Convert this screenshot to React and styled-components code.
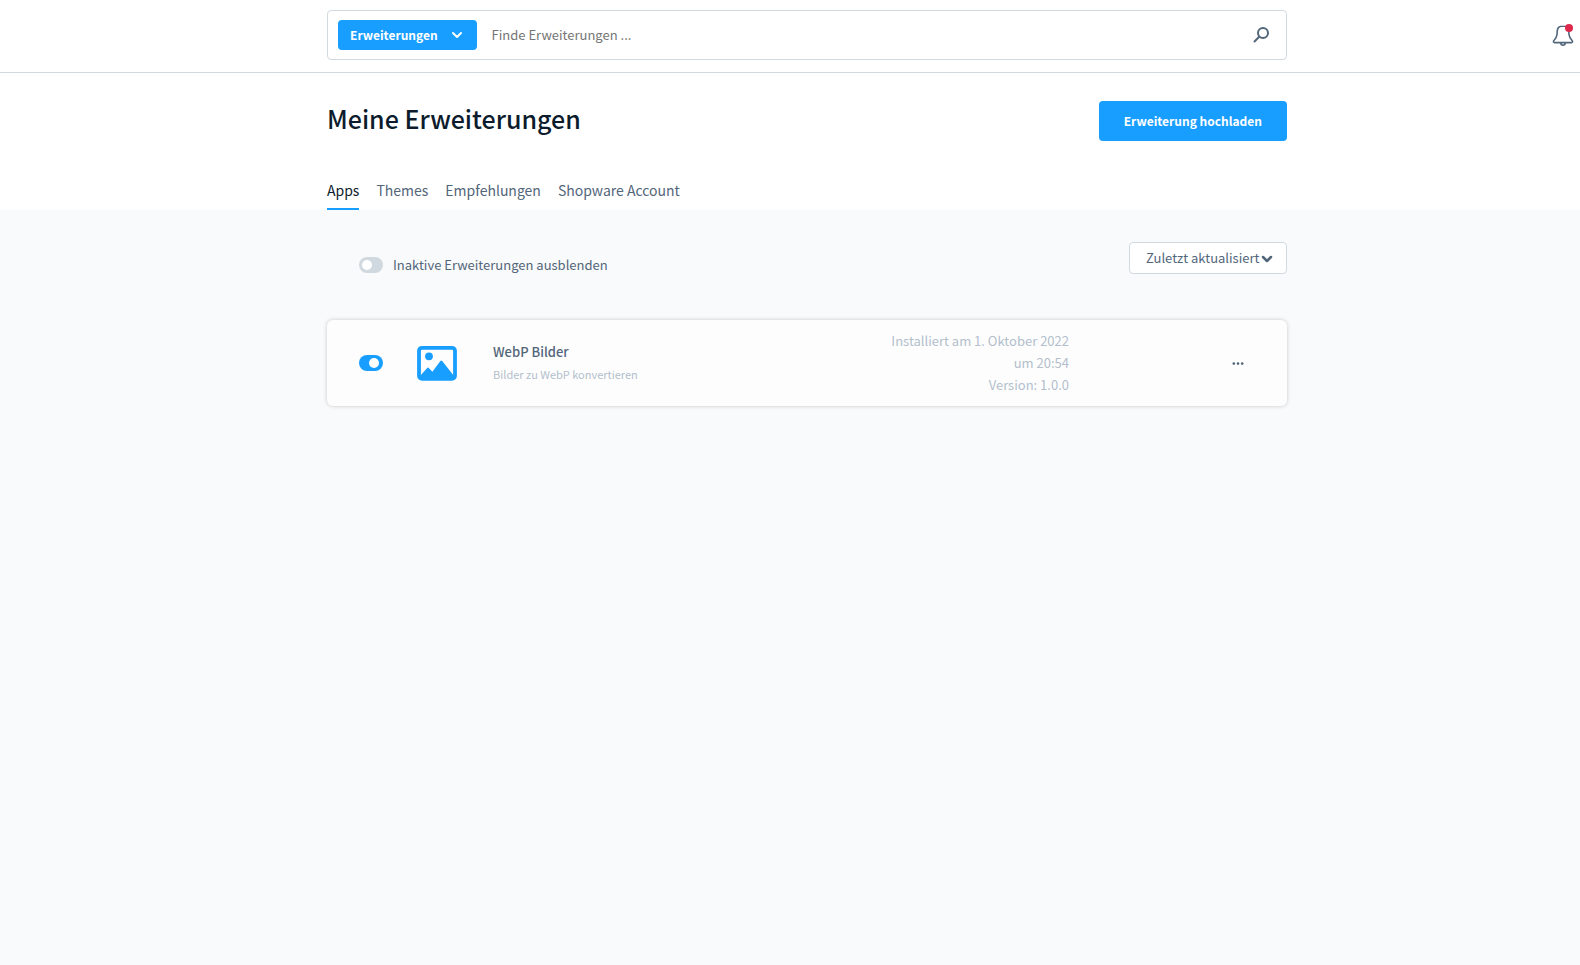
import React, { useState } from 'react'
import styled, { createGlobalStyle, ThemeProvider } from 'styled-components'

const theme = {
    font: '"Noto Sans CJK SC", "Source Sans Pro", sans-serif',
    blue: '#189eff',
    text: '#52667a',
    dark: '#0c1c2c',
    light: '#b3bfcc',
    border: '#d1d9e0',
    body: '#f9fafb',
    red: '#de294c',
    fontxs: '11px',
    fontbtn: '12px',
    fontsm: '13px',
    fontmd: '14px',
    fontxl: '25px',
}

const GlobalStyle = createGlobalStyle`
*, *::before, *::after {
    box-sizing: border-box;
}
body {
    margin: 0;
    background-color: ${props => props.theme.body};
    font-family: ${props => props.theme.font};
    font-size: ${props => props.theme.fontsm};
    line-height: 22px;
    color: ${props => props.theme.text};
}
button, input, select {
    font: inherit;
    color: inherit;
}
button, select {
    cursor: pointer;
}
`

const Header = styled.header`
display: grid;
grid-template-columns: 1fr minmax(0, 960px) 1fr;
padding: 10px 0 12px 34px;
background-color: #fff;
border-bottom: 1px solid ${props => props.theme.border};
`

const SearchBar = styled.form`
grid-column: 2;
display: flex;
align-items: center;
height: 50px;
padding: 0 16px 0 10px;
border: 1px solid ${props => props.theme.border};
border-radius: 4px;
`

const Button = styled.button`
border: 0;
border-radius: 4px;
background-color: ${props => props.theme.blue};
color: #fff;
font-size: ${props => props.theme.fontbtn};
font-weight: 700;
`

const TypeButton = styled(Button)`
display: flex;
align-items: center;
gap: 13px;
height: 30px;
padding: 0 14px 0 12px;
`

const PrimaryButton = styled(Button)`
height: 40px;
padding: 0 25px;
`

const SearchInput = styled.input`
flex: 1;
min-width: 0;
padding: 0 15px;
border: 0;
outline: 0;
background: none;

&::placeholder{
    color: #757575;
    opacity: 1;
}
`

const IconButton = styled.button`
display: flex;
padding: 0;
border: 0;
background: none;
`

const HeaderActions = styled.div`
display: flex;
justify-content: flex-end;
align-items: center;
padding-right: 6px;
`

const PageHead = styled.div`
padding-left: 34px;
background-color: #fff;
`

const Container = styled.div`
max-width: 960px;
margin: 0 auto;
`

const TitleRow = styled.div`
display: flex;
justify-content: space-between;
align-items: flex-start;
padding: 28px 0 32px;
`

const Title = styled.h1`
margin: 0;
font-size: ${props => props.theme.fontxl};
font-weight: 500;
line-height: 34px;
color: ${props => props.theme.dark};
`

const Tabs = styled.nav`
display: flex;
gap: 17px;
`

const Tab = styled.a`
padding: 6px 0 7px;
border-bottom: 2px solid ${props => props.$active ? props.theme.blue : 'transparent'};
font-size: ${props => props.theme.fontmd};
color: ${props => props.$active ? props.theme.dark : props.theme.text};
text-decoration: none;
`

const Content = styled.main`
padding: 32px 0 32px 34px;
`

const Toolbar = styled.div`
display: flex;
justify-content: space-between;
align-items: flex-start;
margin-bottom: 44px;
`

const SwitchLabel = styled.label`
display: flex;
align-items: center;
gap: 10px;
padding: 12px 0 0 32px;
cursor: pointer;
`

const Switch = styled.input`
appearance: none;
flex: none;
display: flex;
align-items: center;
width: 24px;
height: 16px;
margin: 0;
padding: 3px;
border-radius: 8px;
background-color: ${props => props.theme.border};
cursor: pointer;

&::before{
    content: '';
    width: 10px;
    height: 10px;
    border-radius: 50%;
    background-color: #fff;
}
&:checked{
    justify-content: flex-end;
    padding-right: 4px;
    background-color: ${props => props.theme.blue};
}
`

const SelectWrap = styled.div`
position: relative;

svg{
    position: absolute;
    top: 12px;
    right: 14px;
    pointer-events: none;
}
`

const Select = styled.select`
appearance: none;
height: 32px;
padding: 0 26px 0 16px;
border: 1px solid ${props => props.theme.border};
border-radius: 4px;
background-color: #fff;
`

const Card = styled.article`
display: grid;
grid-template-columns: 24px 42px 1fr 180px 142px;
align-items: center;
column-gap: 34px;
padding: 10px 42px 10px 32px;
border-radius: 6px;
background-color: #fdfdfd;
box-shadow: 0 0 4px rgba(0, 0, 0, 0.2);
`

const Info = styled.div`
display: flex;
flex-direction: column;
`

const Name = styled.span`
font-weight: 500;
`

const Description = styled.span`
font-size: ${props => props.theme.fontxs};
color: ${props => props.theme.light};
`

const Meta = styled.div`
text-align: right;
color: ${props => props.theme.light};
`

const MenuCell = styled.div`
display: flex;
justify-content: flex-end;
`

const Chevron = ({ width = 2 }) => (
    <svg width="12" height="10" viewBox="0 0 12 10" fill="none" stroke="currentColor" strokeWidth={width} strokeLinecap="round" strokeLinejoin="round">
        <path d="M2 3l4 4 4-4" />
    </svg>
)

const SearchIcon = () => (
    <svg width="18" height="18" viewBox="0 0 18 18" fill="none" stroke="currentColor" strokeWidth="2" strokeLinecap="round">
        <circle cx="11" cy="7" r="5" />
        <path d="M7.2 10.8L2.5 15.5" />
    </svg>
)

const BellIcon = () => (
    <svg width="22" height="24" viewBox="0 0 22 24" fill="none" stroke="currentColor" strokeWidth="1.6" strokeLinejoin="round">
        <path d="M11 3C7.2 3 5.2 5.4 5.2 8.6c0 4.2-.6 6-2.5 7.9-.7.7-1.3 1.3-1.3 2.1 0 .7.4 1 1.1 1h17c.7 0 1.1-.3 1.1-1 0-.8-.6-1.4-1.3-2.1-1.9-1.9-2.5-3.7-2.5-7.9C16.8 5.4 14.8 3 11 3z" />
        <path d="M8.8 20a2.2 2.2 0 0 0 4.4 0" />
        <circle cx="17" cy="5" r="4" fill={theme.red} stroke="none" />
    </svg>
)

const ImageIcon = () => (
    <svg width="40" height="36" viewBox="0 0 40 36">
        <rect x="2" y="2.8" width="36" height="31" rx="3" fill="none" stroke={theme.blue} strokeWidth="3.8" />
        <circle cx="12" cy="11.3" r="3.9" fill={theme.blue} />
        <path d="M3 32v-1l7.2-8 .8-.5.8.5 3.600 3.700 8-10.700.9-.6.9.6L37 31v1z" fill={theme.blue} />
    </svg>
)

const DotsIcon = () => (
    <svg width="14" height="14" viewBox="0 0 14 14" fill="currentColor">
        <circle cx="2.8" cy="7.6" r="1.3" />
        <circle cx="7" cy="7.6" r="1.3" />
        <circle cx="11.2" cy="7.6" r="1.3" />
    </svg>
)

const tabs = ['Apps', 'Themes', 'Empfehlungen', 'Shopware Account']

const App = () => {
    const [hideInactive, setHideInactive] = useState(false)
    const [active, setActive] = useState(true)

    return (
        <ThemeProvider theme={theme}>
            <GlobalStyle />
            <Header>
                <SearchBar role="search">
                    <TypeButton type="button">
                        Erweiterungen
                        <Chevron />
                    </TypeButton>
                    <SearchInput type="text" placeholder="Finde Erweiterungen ..." aria-label="Finde Erweiterungen" />
                    <IconButton type="submit" aria-label="Suchen">
                        <SearchIcon />
                    </IconButton>
                </SearchBar>
                <HeaderActions>
                    <IconButton type="button" aria-label="Benachrichtigungen">
                        <BellIcon />
                    </IconButton>
                </HeaderActions>
            </Header>

            <PageHead>
                <Container>
                    <TitleRow>
                        <Title>Meine Erweiterungen</Title>
                        <PrimaryButton type="button">Erweiterung hochladen</PrimaryButton>
                    </TitleRow>
                    <Tabs>
                        {tabs.map((tab, i) => (
                            <Tab key={tab} href="#" $active={i === 0}>{tab}</Tab>
                        ))}
                    </Tabs>
                </Container>
            </PageHead>

            <Content>
                <Container>
                    <Toolbar>
                        <SwitchLabel>
                            <Switch type="checkbox" checked={hideInactive} onChange={e => setHideInactive(e.target.checked)} />
                            Inaktive Erweiterungen ausblenden
                        </SwitchLabel>
                        <SelectWrap>
                            <Select aria-label="Sortierung">
                                <option>Zuletzt aktualisiert</option>
                            </Select>
                            <Chevron width={2.5} />
                        </SelectWrap>
                    </Toolbar>

                    <Card>
                        <Switch type="checkbox" aria-label="WebP Bilder" checked={active} onChange={e => setActive(e.target.checked)} />
                        <ImageIcon />
                        <Info>
                            <Name>WebP Bilder</Name>
                            <Description>Bilder zu WebP konvertieren</Description>
                        </Info>
                        <Meta>
                            Installiert am 1. Oktober 2022 um 20:54
                            <br />
                            Version: 1.0.0
                        </Meta>
                        <MenuCell>
                            <IconButton type="button" aria-label="Menü">
                                <DotsIcon />
                            </IconButton>
                        </MenuCell>
                    </Card>
                </Container>
            </Content>
        </ThemeProvider>
    )
}

export default App
